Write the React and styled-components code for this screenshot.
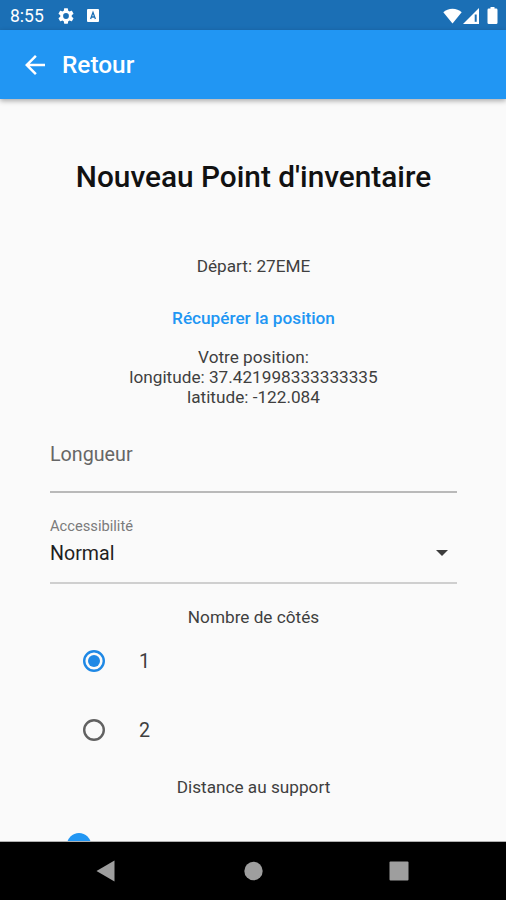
import { useState } from "react";
import styled, { createGlobalStyle } from "styled-components";

export default function App() {
  const [sides, setSides] = useState("1");

  return (
    <Screen>
      <GlobalStyle />
      <StatusBar>
        <Clock>8:55</Clock>
        <GearIcon />
        <KeyboardIcon />
        <Spacer />
        <WifiIcon />
        <SignalIcon />
        <BatteryIcon />
      </StatusBar>
      <AppBar>
        <BackIcon />
        <h1>Retour</h1>
      </AppBar>
      <Content>
        <Title>Nouveau Point d'inventaire</Title>
        <Departure>Départ: 27EME</Departure>
        <TextButton>Récupérer la position</TextButton>
        <Position>
          <span>Votre position:</span>
          <span>longitude: 37.421998333333335</span>
          <span>latitude: -122.084</span>
        </Position>
        <LengthField>Longueur</LengthField>
        <SelectField>
          <small>Accessibilité</small>
          <SelectValue>
            Normal
            <ArrowIcon />
          </SelectValue>
        </SelectField>
        <SidesLabel>Nombre de côtés</SidesLabel>
        <RadioGroup>
          {["1", "2"].map((value) => (
            <RadioRow key={value} onClick={() => setSides(value)}>
              <RadioIcon checked={sides === value} />
              <span>{value}</span>
            </RadioRow>
          ))}
        </RadioGroup>
        <DistanceLabel>Distance au support</DistanceLabel>
        <SliderThumb />
      </Content>
      <NavBar>
        <svg width="20" height="22" viewBox="0 0 20 22">
          <path d="M18.5 0.5v21L0.5 11z" />
        </svg>
        <svg width="20" height="20" viewBox="0 0 20 20">
          <circle cx="10.5" cy="10" r="9.2" />
        </svg>
        <svg width="20" height="20" viewBox="0 0 20 20">
          <rect x="0.5" y="0.5" width="19" height="19" rx="1" />
        </svg>
      </NavBar>
    </Screen>
  );
}

function GearIcon() {
  return (
    <Gear viewBox="2 2 20 20">
      <path d="M19.14 12.94c.04-.3.06-.61.06-.94 0-.32-.02-.64-.07-.94l2.03-1.58a.49.49 0 0 0 .12-.61l-1.92-3.32a.488.488 0 0 0-.59-.22l-2.39.96c-.5-.38-1.03-.7-1.62-.94l-.36-2.54a.484.484 0 0 0-.48-.41h-3.84c-.24 0-.43.17-.47.41l-.36 2.54c-.59.24-1.13.57-1.62.94l-2.39-.96c-.22-.08-.47 0-.59.22L2.74 8.87c-.12.21-.08.47.12.61l2.03 1.58c-.05.3-.09.63-.09.94s.02.64.07.94l-2.03 1.58a.49.49 0 0 0-.12.61l1.92 3.32c.12.22.37.29.59.22l2.39-.96c.5.38 1.03.7 1.62.94l.36 2.54c.05.24.24.41.48.41h3.84c.24 0 .44-.17.47-.41l.36-2.54c.59-.24 1.13-.56 1.62-.94l2.39.96c.22.08.47 0 .59-.22l1.92-3.32c.12-.22.07-.47-.12-.61l-2.01-1.58zM12 15.6A3.6 3.6 0 1 1 12 8.4a3.6 3.6 0 0 1 0 7.2z" />
    </Gear>
  );
}

function KeyboardIcon() {
  return (
    <Keyboard viewBox="0 0 12 13">
      <rect width="12" height="13" rx="1" fill="#fff" />
      <path d="M3.6 10 6 3.4 8.4 10M4.5 8h3" fill="none" stroke="#1b6fb5" strokeWidth="1.3" />
    </Keyboard>
  );
}

function WifiIcon() {
  return (
    <Wifi viewBox="0 0 19 16">
      <path d="M9.5 15.5 0.3 4.2C2.7 2 5.9 0.8 9.5 0.8s6.8 1.2 9.2 3.4z" />
    </Wifi>
  );
}

function SignalIcon() {
  return (
    <Signal viewBox="0 0 16 16">
      <path d="M16 0v16H0z" />
      <path d="M12.7 6.5v7.3" stroke="#1b6fb5" strokeWidth="2" />
    </Signal>
  );
}

function BatteryIcon() {
  return (
    <Battery viewBox="0 0 10 17">
      <path d="M3 0h4v1.6h1.7q1.3 0 1.3 1.3v12.8q0 1.3-1.3 1.3H1.3Q0 17 0 15.7V2.9q0-1.3 1.3-1.3H3z" />
    </Battery>
  );
}

function BackIcon() {
  return (
    <Back viewBox="4 4 16 16">
      <path d="M20 11H7.83l5.59-5.59L12 4l-8 8 8 8 1.41-1.41L7.83 13H20v-2z" />
    </Back>
  );
}

function ArrowIcon() {
  return (
    <Arrow viewBox="0 0 12 6">
      <path d="M0 0h12L6 6z" />
    </Arrow>
  );
}

function RadioIcon({ checked }) {
  return (
    <Radio viewBox="0 0 22 22" $checked={checked}>
      <circle cx="11" cy="11" r="9.8" fill="none" stroke="currentColor" strokeWidth="2.4" />
      {checked && <circle cx="11" cy="11" r="6" fill="currentColor" />}
    </Radio>
  );
}

const GlobalStyle = createGlobalStyle`
  * {
    box-sizing: border-box;
  }
  body, h1, h2, p {
    margin: 0;
  }
  svg {
    display: block;
    flex-shrink: 0;
  }
`;

const Screen = styled.div`
  width: 506px;
  height: 900px;
  display: flex;
  flex-direction: column;
  overflow: hidden;
  background-color: #fafafa;
  font-family: Roboto, sans-serif;
  color: #3f3f3f;
`;

const StatusBar = styled.div`
  height: 30px;
  flex-shrink: 0;
  display: flex;
  align-items: center;
  padding: 1px 8px 0 10px;
  background-color: #1b6fb5;
  color: white;
  svg {
    fill: white;
  }
`;

const Clock = styled.span`
  width: 48px;
  font-size: 17.5px;
  line-height: 20px;
`;

const Spacer = styled.div`
  flex: 1;
`;

const Gear = styled.svg`
  width: 16px;
  height: 16px;
  margin-right: 13px;
`;

const Keyboard = styled.svg`
  width: 12px;
  height: 13px;
`;

const Wifi = styled.svg`
  width: 19px;
  height: 16px;
  margin-right: 1px;
`;

const Signal = styled.svg`
  width: 16px;
  height: 16px;
  margin-right: 8px;
`;

const Battery = styled.svg`
  width: 11px;
  height: 17px;
`;

const AppBar = styled.header`
  height: 69px;
  flex-shrink: 0;
  display: flex;
  align-items: center;
  gap: 17px;
  padding-left: 25px;
  background-color: #2196f3;
  box-shadow: 0 2px 5px rgba(0, 0, 0, 0.32);
  color: white;
  z-index: 1;
  h1 {
    font-size: 24.4px;
    font-weight: 500;
    line-height: 30px;
  }
`;

const Back = styled.svg`
  width: 20px;
  height: 20px;
  fill: white;
`;

const Content = styled.main`
  height: 743px;
  flex-shrink: 0;
  overflow: hidden;
  display: flex;
  flex-direction: column;
  align-items: center;
  padding: 61px 49px 0 50px;
  border-bottom: 1px solid #b0b0b0;
  > * {
    flex-shrink: 0;
  }
`;

const Title = styled.h2`
  font-size: 29.8px;
  font-weight: 500;
  line-height: 34px;
  color: #111;
  white-space: nowrap;
`;

const BodyText = styled.p`
  font-size: 17.2px;
  line-height: 20px;
  white-space: nowrap;
`;

const Departure = styled(BodyText)`
  margin-top: 62px;
`;

const TextButton = styled.button`
  margin-top: 32px;
  padding: 0;
  border: none;
  background: none;
  color: #2196f3;
  font-family: inherit;
  font-size: 17.2px;
  font-weight: 500;
  line-height: 20px;
`;

const Position = styled(BodyText)`
  margin-top: 19px;
  display: flex;
  flex-direction: column;
  align-items: center;
`;

const LengthField = styled.div`
  width: 100%;
  height: 50px;
  margin-top: 36px;
  border-bottom: 2px solid #b9b9b9;
  font-size: 19.7px;
  line-height: 24px;
  color: #666;
`;

const SelectField = styled.div`
  width: 100%;
  height: 67px;
  margin-top: 24px;
  border-bottom: 2px solid #cfcfcf;
  display: flex;
  flex-direction: column;
  small {
    font-size: 14.7px;
    line-height: 18px;
    color: #7b7b7b;
  }
`;

const SelectValue = styled.div`
  display: flex;
  align-items: center;
  justify-content: space-between;
  margin-top: 7px;
  padding-right: 9px;
  font-size: 19.6px;
  line-height: 24px;
  color: #1f1f1f;
`;

const Arrow = styled.svg`
  width: 12px;
  height: 6px;
  margin-bottom: 2px;
  fill: #3c3c3c;
`;

const SidesLabel = styled(BodyText)`
  margin-top: 23px;
`;

const RadioGroup = styled.div`
  width: 100%;
  padding-left: 33px;
`;

const RadioRow = styled.div`
  height: 69px;
  display: flex;
  align-items: center;
  gap: 34px;
  padding-bottom: 1px;
  font-size: 19.7px;
  line-height: 24px;
  span {
    padding-top: 2px;
  }
`;

const Radio = styled.svg`
  width: 22px;
  height: 22px;
  color: ${({ $checked }) => ($checked ? "#1e88e5" : "#616161")};
`;

const DistanceLabel = styled(BodyText)`
  margin-top: 12px;
`;

const SliderThumb = styled.div`
  width: 24px;
  height: 24px;
  align-self: flex-start;
  margin: 36px 0 0 17px;
  border-radius: 50%;
  background-color: #2196f3;
`;

const NavBar = styled.nav`
  height: 58px;
  flex-shrink: 0;
  display: flex;
  align-items: center;
  justify-content: space-between;
  padding: 0 97px 0 96px;
  background-color: black;
  svg {
    fill: #9e9e9e;
  }
`;
